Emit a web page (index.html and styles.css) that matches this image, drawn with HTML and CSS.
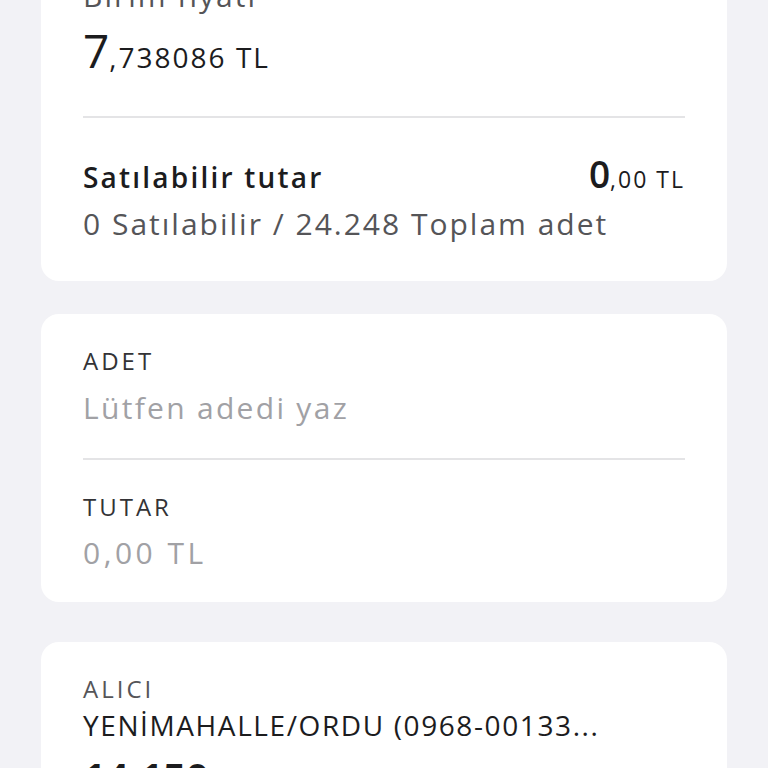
FILE: index.html
```html
<!DOCTYPE html>
<html lang="tr">
<head>
    <meta charset="UTF-8">
    <meta name="viewport" content="width=device-width, initial-scale=1.0">
    <title>Satış</title>
    <link rel="stylesheet" href="styles.css">
</head>
<body>
    <main class="page">
        <section class="card">
            <div class="label-muted">Birim fiyatı</div>
            <div class="price"><span class="big">7</span>,738086 TL</div>
            <div class="divider"></div>
            <div class="row">
                <span class="row-title">Satılabilir tutar</span>
                <span class="amount"><span class="amount-big">0</span>,00 TL</span>
            </div>
            <div class="sub">0 Satılabilir / 24.248 Toplam adet</div>
        </section>

        <section class="card card-form">
            <div class="caps">ADET</div>
            <div class="placeholder">Lütfen adedi yaz</div>
            <div class="divider divider-form"></div>
            <div class="caps">TUTAR</div>
            <div class="placeholder placeholder-num">0,00 TL</div>
        </section>

        <section class="card card-buyer">
            <div class="caps caps-light">ALICI</div>
            <div class="buyer">YENİMAHALLE/ORDU (0968-00133...</div>
            <div class="qty">14.150 <span class="qty-unit">adet</span></div>
        </section>
    </main>
</body>
</html>
```

FILE: styles.css
```css
body {
    margin: 0;
    background: #f2f2f6;
    font-family: 'Open Sans', 'Noto Sans', sans-serif;
    color: #1c1c1e;
    overflow: hidden;
}

.page {
    margin-top: -53px;
    padding: 0 41px;
    display: flex;
    flex-direction: column;
}

.card {
    background: #ffffff;
    border-radius: 18px;
    padding: 32px 42px 39px;
}

.label-muted {
    font-size: 30px;
    line-height: 34px;
    letter-spacing: 2px;
    color: #555558;
}

.price {
    margin-top: 12px;
    font-size: 28px;
    line-height: 50px;
    letter-spacing: 2px;
    font-weight: 500;
}

.price .big {
    font-size: 46px;
    letter-spacing: 0;
}

.divider {
    height: 2px;
    background: #e4e4e6;
    margin: 34px 0 38px;
}

.row {
    display: flex;
    justify-content: space-between;
    align-items: baseline;
    line-height: 36px;
}

.row-title {
    font-size: 28px;
    letter-spacing: 2.2px;
    font-weight: 600;
}

.amount {
    font-size: 23px;
    letter-spacing: 2px;
    font-weight: 400;
}

.amount-big {
    font-size: 37px;
    letter-spacing: 0;
    font-weight: 600;
}

.sub {
    margin-top: 9px;
    font-size: 30px;
    line-height: 36px;
    letter-spacing: 2px;
    color: #555558;
}

.card-form {
    margin-top: 33px;
    padding-bottom: 31px;
}

.caps {
    font-size: 24px;
    line-height: 30px;
    letter-spacing: 3px;
    color: #333336;
    font-weight: 500;
}

.caps-light {
    color: #555558;
}

.placeholder {
    margin-top: 14px;
    font-size: 30px;
    line-height: 36px;
    letter-spacing: 2.3px;
    color: #a1a1a5;
    font-weight: 500;
}

.placeholder-num {
    margin-top: 13px;
    letter-spacing: 3.5px;
}

.divider-form {
    margin: 32px 0 32px;
}

.card-buyer {
    margin-top: 40px;
}

.buyer {
    margin-top: 3px;
    font-size: 28px;
    line-height: 36px;
    letter-spacing: 1.6px;
}

.qty {
    margin-top: 10px;
    font-size: 40px;
    line-height: 48px;
    font-weight: 700;
}

.qty-unit {
    font-size: 22px;
    font-weight: 400;
    color: #8e8e93;
}
```
